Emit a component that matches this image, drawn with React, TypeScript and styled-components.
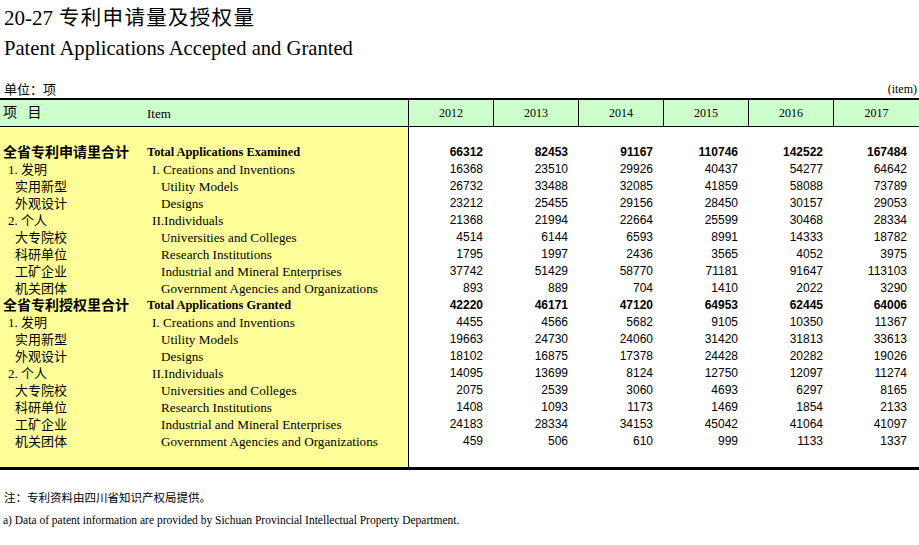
import React from "react";
import styled, { createGlobalStyle } from "styled-components";

const SERIF = `"Liberation Serif", "Noto Sans CJK SC", serif`;
const SANS = `"Liberation Sans", Arial, sans-serif`;
const CJK = `"Noto Sans CJK SC", sans-serif`;
const COLS = "143px 265px repeat(5, 85px) 1fr";

const Global = createGlobalStyle`
  html, body { margin: 0; padding: 0; background: #fff; }
  body { font-family: ${SERIF}; color: #000; }
  * { box-sizing: border-box; }
`;

const Page = styled.div`
  width: 919px;
  display: flex;
  flex-direction: column;
`;

const Title = styled.h1`
  margin: 0;
  height: 33px;
  padding: 3px 0 0 4px;
  font: 400 21px/30px ${SERIF};
`;

const TitleCn = styled.span`
  font-family: ${CJK};
  font-size: 20.5px;
  line-height: 1;
  letter-spacing: 1.3px;
  margin-left: 6px;
`;

const Subtitle = styled.h2`
  margin: 2px 0 0;
  padding-left: 4px;
  font: 400 20.6px/26px ${SERIF};
`;

const UnitBar = styled.div`
  display: flex;
  justify-content: space-between;
  align-items: flex-end;
  height: 37px;
  padding: 0 2px 0 4px;
  font: 400 12px/17px ${SERIF};
`;

const UnitCn = styled.span`
  font-size: 13px;
`;

const Table = styled.div`
  border-top: 2px solid #000;
  border-bottom: 3px solid #000;
`;

const HeadRow = styled.div`
  display: grid;
  grid-template-columns: ${COLS};
  height: 27px;
  background: #ccffcc;
  border-bottom: 1px solid #000;
`;

const HeadCell = styled.div<{ $year?: boolean; $cn?: boolean; $pad?: number }>`
  display: flex;
  align-items: center;
  justify-content: ${(p) => (p.$year ? "center" : "flex-start")};
  padding-left: ${(p) => p.$pad ?? 0}px;
  border-left: ${(p) => (p.$year ? "1px solid #000" : "none")};
  font: 400 ${(p) => (p.$cn ? 14 : p.$year ? 12 : 13)}px / 1 ${SERIF};
  word-spacing: 7px;
`;

const Row = styled.div`
  display: grid;
  grid-template-columns: ${COLS};
  height: 17px;
`;

const LabelCell = styled.div<{ $pad: number; $bold?: boolean; $cn?: boolean }>`
  background: #ffff99;
  padding-left: ${(p) => p.$pad}px;
  white-space: nowrap;
  overflow: hidden;
  font-family: ${SERIF};
  font-weight: ${(p) => (p.$bold ? 700 : 400)};
  font-size: ${(p) => (p.$cn ? (p.$bold ? 14 : 13) : p.$bold ? 12.4 : 13.2)}px;
  line-height: 17px;
`;

const NumCell = styled.div<{ $first?: boolean; $last?: boolean; $bold?: boolean }>`
  border-left: ${(p) => (p.$first ? "1px solid #000" : "none")};
  padding-right: ${(p) => (p.$last ? 12 : 10)}px;
  text-align: right;
  font: ${(p) => (p.$bold ? 700 : 400)} 12px/17px ${SANS};
`;

const Note = styled.p<{ $cn?: boolean }>`
  margin: ${(p) => (p.$cn ? "18px 0 0" : "2px 0 0")};
  padding-left: ${(p) => (p.$cn ? 4 : 3)}px;
  font: 400 11.5px/20px ${SERIF};
`;

type Item = { cn: string; en: string; level: 0 | 1 | 2; v: number[] };

const data: Item[] = [
  { cn: "全省专利申请里合计", en: "Total Applications Examined", level: 0, v: [66312, 82453, 91167, 110746, 142522, 167484] },
  { cn: "1. 发明", en: "I. Creations and Inventions", level: 1, v: [16368, 23510, 29926, 40437, 54277, 64642] },
  { cn: "实用新型", en: "Utility Models", level: 2, v: [26732, 33488, 32085, 41859, 58088, 73789] },
  { cn: "外观设计", en: "Designs", level: 2, v: [23212, 25455, 29156, 28450, 30157, 29053] },
  { cn: "2. 个人", en: "II.Individuals", level: 1, v: [21368, 21994, 22664, 25599, 30468, 28334] },
  { cn: "大专院校", en: "Universities and Colleges", level: 2, v: [4514, 6144, 6593, 8991, 14333, 18782] },
  { cn: "科研单位", en: "Research Institutions", level: 2, v: [1795, 1997, 2436, 3565, 4052, 3975] },
  { cn: "工矿企业", en: "Industrial and Mineral Enterprises", level: 2, v: [37742, 51429, 58770, 71181, 91647, 113103] },
  { cn: "机关团体", en: "Government Agencies and Organizations", level: 2, v: [893, 889, 704, 1410, 2022, 3290] },
  { cn: "全省专利授权里合计", en: "Total Applications Granted", level: 0, v: [42220, 46171, 47120, 64953, 62445, 64006] },
  { cn: "1. 发明", en: "I. Creations and Inventions", level: 1, v: [4455, 4566, 5682, 9105, 10350, 11367] },
  { cn: "实用新型", en: "Utility Models", level: 2, v: [19663, 24730, 24060, 31420, 31813, 33613] },
  { cn: "外观设计", en: "Designs", level: 2, v: [18102, 16875, 17378, 24428, 20282, 19026] },
  { cn: "2. 个人", en: "II.Individuals", level: 1, v: [14095, 13699, 8124, 12750, 12097, 11274] },
  { cn: "大专院校", en: "Universities and Colleges", level: 2, v: [2075, 2539, 3060, 4693, 6297, 8165] },
  { cn: "科研单位", en: "Research Institutions", level: 2, v: [1408, 1093, 1173, 1469, 1854, 2133] },
  { cn: "工矿企业", en: "Industrial and Mineral Enterprises", level: 2, v: [24183, 28334, 34153, 45042, 41064, 41097] },
  { cn: "机关团体", en: "Government Agencies and Organizations", level: 2, v: [459, 506, 610, 999, 1133, 1337] },
];

const years = [2012, 2013, 2014, 2015, 2016, 2017];
const cnPad = [3, 8, 15];
const enPad = [4, 9, 18];

const Spacer = () => (
  <Row>
    <LabelCell $pad={0} />
    <LabelCell $pad={0} />
    {years.map((y, i) => (
      <NumCell key={y} $first={i === 0} />
    ))}
  </Row>
);

export default function App() {
  return (
    <Page>
      <Global />
      <Title>
        20-27<TitleCn>专利申请量及授权量</TitleCn>
      </Title>
      <Subtitle>Patent Applications Accepted and Granted</Subtitle>
      <UnitBar>
        <UnitCn>单位：项</UnitCn>
        <span>(item)</span>
      </UnitBar>
      <Table>
        <HeadRow>
          <HeadCell $cn $pad={3}>项 目</HeadCell>
          <HeadCell $pad={4}>Item</HeadCell>
          {years.map((y) => (
            <HeadCell key={y} $year>
              {y}
            </HeadCell>
          ))}
        </HeadRow>
        <Spacer />
        {data.map((r, idx) => {
          const bold = r.level === 0;
          return (
            <Row key={idx}>
              <LabelCell $cn $bold={bold} $pad={cnPad[r.level]}>
                {r.cn}
              </LabelCell>
              <LabelCell $bold={bold} $pad={enPad[r.level]}>
                {r.en}
              </LabelCell>
              {r.v.map((n, i) => (
                <NumCell key={i} $first={i === 0} $last={i === 5} $bold={bold}>
                  {n}
                </NumCell>
              ))}
            </Row>
          );
        })}
        <Spacer />
      </Table>
      <Note $cn>注：专利资料由四川省知识产权局提供。</Note>
      <Note>a) Data of patent information are provided by Sichuan Provincial Intellectual Property Department.</Note>
    </Page>
  );
}
